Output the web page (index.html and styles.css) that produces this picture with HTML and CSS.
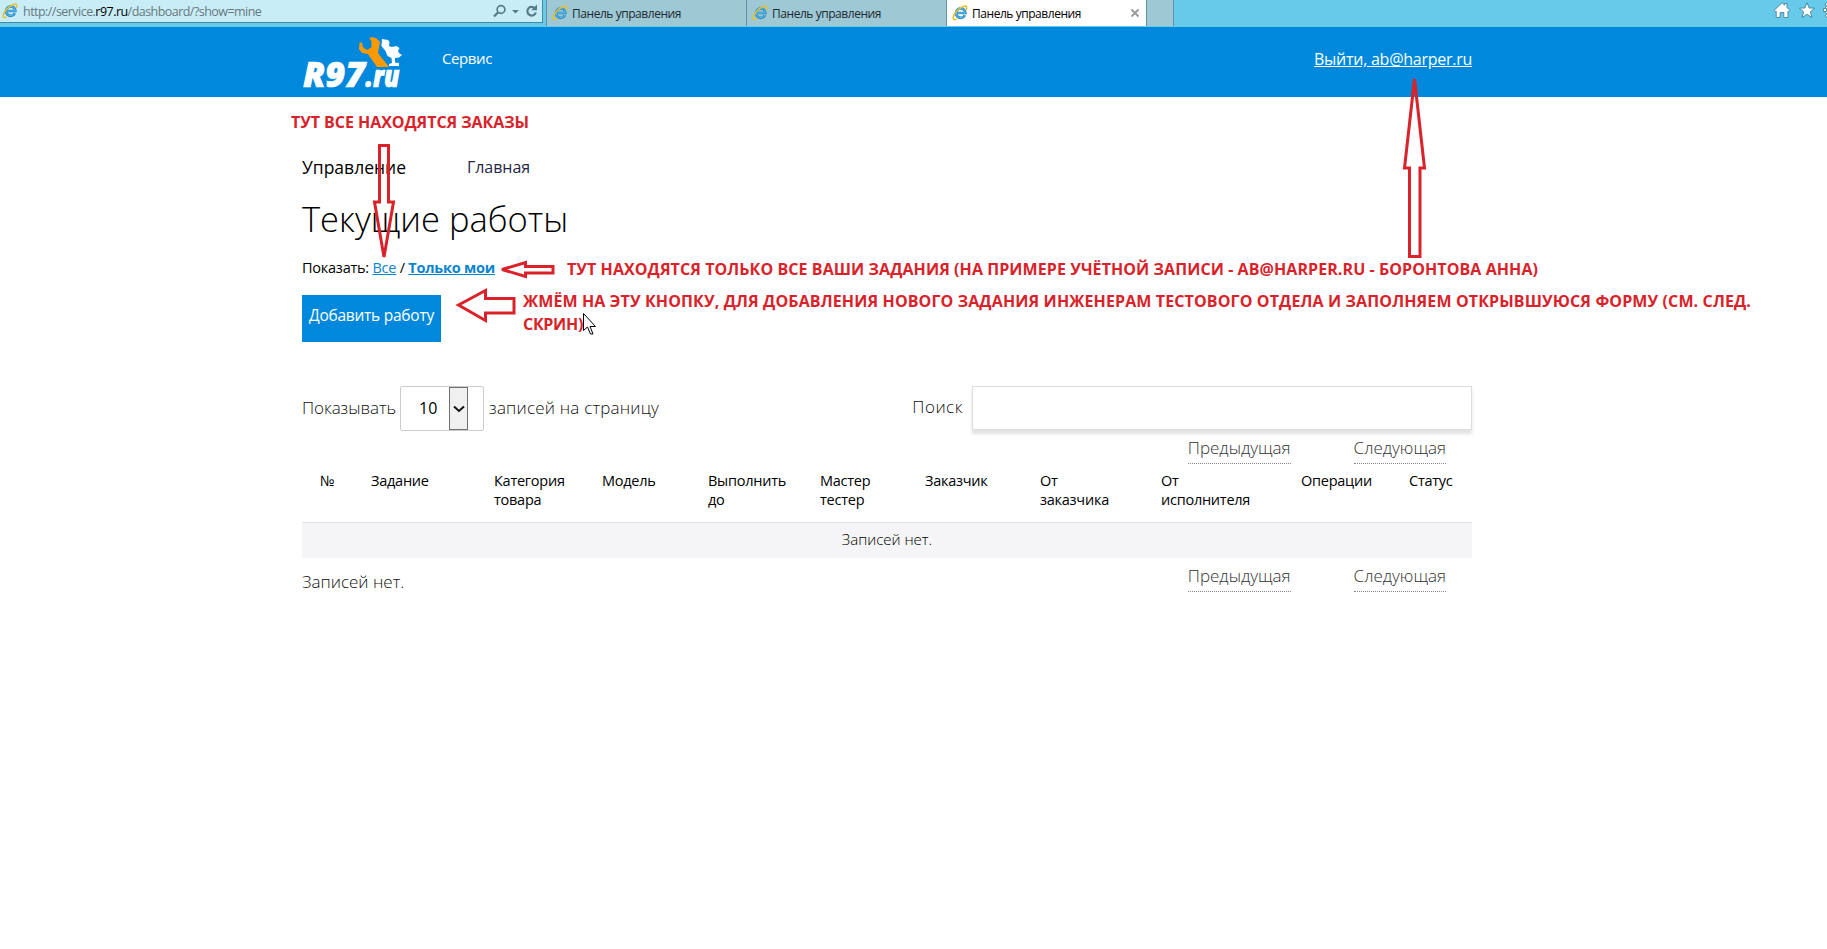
FILE: index.html
```html
<!DOCTYPE html>
<html lang="ru">
<head>
<meta charset="utf-8">
<title>Панель управления</title>
<link rel="stylesheet" href="styles.css">
</head>
<body>
<svg class="defs" width="0" height="0">
  <symbol id="ie" viewBox="0 0 16 16">
    <path d="M12.9 10.2a4.7 4.7 0 1 1 .5-2.2H4.6" fill="none" stroke="#2f8fc9" stroke-width="2.7"/>
    <path d="M12.6 10.2a4.6 4.6 0 1 1 .6-2.2H5" fill="none" stroke="#63bdea" stroke-width="1"/>
    <path d="M14 5.2C15.4 2.2 14.6.6 12 1.3 8 2.3 3 7 1.4 11.4.6 14 1.6 15.5 4.6 14" fill="none" stroke="#e9bf2c" stroke-width="1.5"/>
  </symbol>
</svg>
<header class="chrome">
  <div class="address">
    <svg class="fav" width="16" height="16"><use href="#ie"/></svg>
    <span class="url">http://service.<b>r97.ru</b>/dashboard/?show=mine</span>
    <svg class="tools" width="50" height="16" viewBox="0 0 50 16" fill="none" stroke="#587b88">
      <circle cx="12" cy="6.5" r="3.9" stroke-width="1.7"/><path d="M9.2 9.3 5 13.500" stroke-width="2.3"/>
      <path d="M23 7h7l-3.500 3.500z" fill="#587b88" stroke="none"/>
      <path d="M45.800 5.300A4.300 4.300 0 1 0 46.800 9.500" stroke-width="2.2"/><path d="M48 1.500v5.800h-5.800z" fill="#587b88" stroke="none"/>
    </svg>
  </div>
  <nav class="tabs">
    <div class="tab"><svg width="16" height="16"><use href="#ie"/></svg><span>Панель управления</span></div>
    <div class="tab"><svg width="16" height="16"><use href="#ie"/></svg><span>Панель управления</span></div>
    <div class="tab on"><svg width="16" height="16"><use href="#ie"/></svg><span>Панель управления</span>
      <svg class="close" width="10" height="10" viewBox="0 0 10 10"><path d="M1.500 1.500l7 7M8.500 1.500l-7 7" stroke="#9a9a9a" stroke-width="1.900"/></svg></div>
    <div class="newtab"></div>
  </nav>
  <svg class="cmds" width="54" height="20" viewBox="0 0 54 20" fill="#fff" stroke="#4f8ba3" stroke-width="1">
    <path d="M1 10.500 9 2.700l2.500 2.400V3.500h2.500v4l3 3-1.500 1.200-.5-.5V17.500h-4.200v-5H7.200v5H3.200v-6.300l-.7.500z"/>
    <path d="M34 2.500l2.100 5.400 5.700.3-4.400 3.600 1.500 5.600-4.900-3.100-4.900 3.100 1.500-5.600-4.400-3.600 5.700-.3z"/>
    <circle cx="57.500" cy="10" r="5.500"/><path d="M50.500 8.500h3v3h-3zM52 4l2-1.500 2 2-2 2zM52 16l2 1.500 2-2-2-2z"/>
  </svg>
</header>

<div class="topbar">
  <a class="logo" href="#">
    <svg width="104" height="56" viewBox="0 0 104 56">
      <path fill="#f90" d="M69 0l5 1 4 4-1 5-1 6 3 4 8 10H75l-7-10-2-3-6-1-3-4 .5-6 2-1 2 6 4 2 4-3V4l-2-2z"/>
      <path fill="#fff" d="M80 2l6 1 1.500 2-.500 4 2.500 1 5-1 3 2-1.500 3 1 2 3 2-3 2.500-4 .5v4.500l4 .5v3H87v-2l3-1-.5-5-4-2-2-5-4-5z"/>
      <text class="big" x="1" y="50" textLength="62" lengthAdjust="spacingAndGlyphs">R97</text>
      <text class="small" x="63.5" y="50" textLength="34" lengthAdjust="spacingAndGlyphs">.ru</text>
    </svg>
  </a>
  <a class="service" href="#">Сервис</a>
  <a class="logout" href="#">Выйти, ab@harper.ru</a>
</div>

<main class="page">
  <nav class="crumbs"><span>Управление</span><a href="#">Главная</a></nav>
  <h1>Текущие работы</h1>
  <p class="filter">Показать: <a href="#">Все</a> / <a class="mine" href="#">Только мои</a></p>
  <a class="add" href="#">Добавить работу</a>

  <div class="controls">
    <span class="l1">Показывать</span>
    <div class="select"><span class="val">10</span><span class="drop"><svg width="12" height="8" viewBox="0 0 12 8"><path d="M1 1.500l5 4.500 5-4.500" fill="none" stroke="#111" stroke-width="2"/></svg></span></div>
    <span class="l2">записей на страницу</span>
    <span class="l3">Поиск</span>
    <input class="search" type="text">
  </div>
  <div class="pager"><a href="#">Предыдущая</a><a href="#">Следующая</a></div>

  <table>
    <colgroup><col class="w1"><col class="w2"><col class="w3"><col class="w4"><col class="w5"><col class="w6"><col class="w7"><col class="w8"><col class="w9"><col class="w10"><col class="w11"></colgroup>
    <thead><tr>
      <th>№</th><th>Задание</th><th>Категория<br>товара</th><th>Модель</th><th>Выполнить<br>до</th><th>Мастер<br>тестер</th><th>Заказчик</th><th>От<br>заказчика</th><th>От<br>исполнителя</th><th>Операции</th><th>Статус</th>
    </tr></thead>
    <tbody><tr><td colspan="11">Записей нет.</td></tr></tbody>
  </table>
  <div class="foot"><span class="info">Записей нет.</span>
    <div class="pager"><a href="#">Предыдущая</a><a href="#">Следующая</a></div></div>
</main>

<div class="note n1">ТУТ ВСЕ НАХОДЯТСЯ ЗАКАЗЫ</div>
<div class="note n2">ТУТ НАХОДЯТСЯ ТОЛЬКО ВСЕ ВАШИ ЗАДАНИЯ (НА ПРИМЕРЕ УЧЁТНОЙ ЗАПИСИ - AB@HARPER.RU - БОРОНТОВА АННА)</div>
<div class="note n3">ЖМЁМ НА ЭТУ КНОПКУ, ДЛЯ ДОБАВЛЕНИЯ НОВОГО ЗАДАНИЯ ИНЖЕНЕРАМ ТЕСТОВОГО ОТДЕЛА И ЗАПОЛНЯЕМ ОТКРЫВШУЮСЯ ФОРМУ (СМ. СЛЕД.<br><span class="tail">СКРИН)</span></div>
<svg class="marks" width="1827" height="360" viewBox="0 0 1827 360">
  <g fill="none" stroke="#d9222a" stroke-width="3" stroke-miterlimit="3">
    <path d="M379.500 145.500h9v56.500h5l-9.500 55-9.500-55h5z"/>
    <path d="M1414.500 79l10 89h-4.500v88.500h-10.500V168H1404.500z"/>
    <path d="M502 269.500 525.500 262.500v4h27.500v6.500h-27.500v3.500z"/>
    <path d="M458.500 305l27-14.500v8h28.500v14.500h-28.500v7.500z"/>
  </g>
  <path d="M583.500 313.500v17l4-3.500 3 7h2.500l-3-7.500h5.500z" fill="#fff" stroke="#000"/>
</svg>
</body>
</html>
```
FILE: styles.css
```css
* { box-sizing: border-box; }
body { margin: 0; width: 1827px; height: 949px; overflow: hidden; position: relative; background: #fff; color: #000; font-family: "Open Sans", "Noto Sans", sans-serif; }
a { color: inherit; text-decoration: none; }
.defs { position: absolute; }

/* Browser bar */
.chrome { display: flex; height: 27px; background: #66cbea; }
.address { display: flex; align-items: center; width: 543px; height: 23px; padding: 0 3px 1px 2px; background: #c9edf7; border: solid #4489a3; border-width: 0 1px 1px 0; }
.url { flex: 1; padding: 2px 0 0 5px; font-size: 12.5px; letter-spacing: -.54px; line-height: 20px; color: #66777d; white-space: nowrap; }
.url b { font-weight: 400; color: #000; }
.tabs { display: flex; height: 26px; margin-left: 3px; border-left: 1px solid #5e93a5; }
.tab { display: flex; align-items: center; width: 200px; padding: 0 6px 0 5px; gap: 4px; background: #9fc8d5; border-right: 1px solid #5e93a5; font-size: 12px; letter-spacing: -.45px; color: #1b2a30; white-space: nowrap; }
.tab.on { background: #fff; color: #000; }
.close { margin-left: auto; }
.newtab { width: 27px; background: #9fc8d5; border-right: 1px solid #5e93a5; }
.cmds { margin-left: auto; }

/* Site header */
.topbar { display: flex; height: 70px; padding: 0 355px 0 302px; background: #0089dc; color: #fff; white-space: nowrap; }
.logo { width: 140px; padding-top: 10px; }
.logo svg { overflow: visible; }
.logo text { fill: #fff; stroke: #fff; stroke-width: .7px; font-family: "Open Sans", sans-serif; font-weight: 800; font-style: italic; }
.big { font-size: 35px; }
.small { font-size: 30px; }
.service { font-size: 15px; letter-spacing: -.4px; line-height: 63px; }
.logout { margin-left: auto; font-size: 16px; letter-spacing: -.26px; line-height: 64px; text-decoration: underline; }

/* Content */
.page { width: 1170px; margin-left: 302px; padding-top: 58px; white-space: nowrap; }
.crumbs { display: flex; gap: 61px; font-size: 17.5px; line-height: 24px; }
.crumbs a { color: #1f2747; font-size: 16px; letter-spacing: -.06px; }
h1 { margin: 18px 0 17px; font-size: 34.5px; line-height: 44px; font-weight: 300; }
.filter { margin: 0 0 17px; font-size: 14.5px; letter-spacing: -.24px; line-height: 20px; }
.filter a { color: #0b84d0; text-decoration: underline; }
.filter .mine { font-weight: 700; }
.add { display: block; width: 139px; height: 47px; background: #0089dc; color: #fff; font-size: 15.5px; letter-spacing: -.25px; line-height: 40px; text-align: center; }
.controls { display: flex; height: 45px; margin-top: 44px; font-size: 17px; font-weight: 300; line-height: 43px; color: #111; }
.l1 { width: 98px; letter-spacing: -.08px; }
.select { display: flex; width: 84px; height: 45px; border: 1px solid #ccc; border-radius: 2px; color: #000; }
.val { width: 48px; padding-left: 18px; line-height: 42px; font-size: 16px; font-weight: 400; }
.drop { display: flex; align-items: center; justify-content: center; width: 19px; border: 1px solid #707070; background: #f0f0f0; }
.l2 { padding-left: 5px; letter-spacing: .2px; }
.l3 { margin-left: auto; padding-right: 9px; line-height: 41px; letter-spacing: .5px; }
.search { width: 500px; height: 44px; border: 1px solid #ddd; box-shadow: 0 4px 3px #e2e2e2; }
.pager { display: flex; justify-content: flex-end; gap: 63px; height: 29px; margin-top: 4px; padding-right: 26px; font-size: 17px; font-weight: 300; line-height: 25px; color: #333; }
.pager a { border-bottom: 1px dotted #888; }

/* Table */
table { width: 1170px; table-layout: fixed; border-collapse: separate; border-spacing: 0; }
th { height: 59px; padding: 6.5px 0 0 18px; border-bottom: 1px solid #e2e2e4; font-size: 14.5px; font-weight: 400; letter-spacing: -.25px; line-height: 19.5px; text-align: left; vertical-align: top; }
td { height: 35px; padding: 0 0 3px; background: #f5f5f7; font-size: 15px; font-weight: 300; line-height: 32px; text-align: center; }
.w1 { width: 51px; } .w2 { width: 123px; } .w3 { width: 108px; } .w4 { width: 106px; } .w5 { width: 112px; } .w6 { width: 105px; }
.w7 { width: 115px; } .w8 { width: 121px; } .w9 { width: 140px; } .w10 { width: 108px; } .w11 { width: 81px; }
.foot { display: flex; justify-content: space-between; margin-top: 1px; font-size: 17px; font-weight: 300; line-height: 25px; color: #111; }
.info { padding-top: 10px; }

/* Notes and arrows over the page */
.note { position: absolute; color: #d9222a; font: 700 16px/23px "Open Sans", sans-serif; white-space: nowrap; }
.n1 { left: 291px; top: 111px; letter-spacing: -.05px; }
.n2 { left: 567px; top: 258px; letter-spacing: .076px; }
.n3 { left: 523px; top: 290px; letter-spacing: .124px; }
.tail { letter-spacing: -.3px; }
.marks { position: absolute; left: 0; top: 0; }
```
